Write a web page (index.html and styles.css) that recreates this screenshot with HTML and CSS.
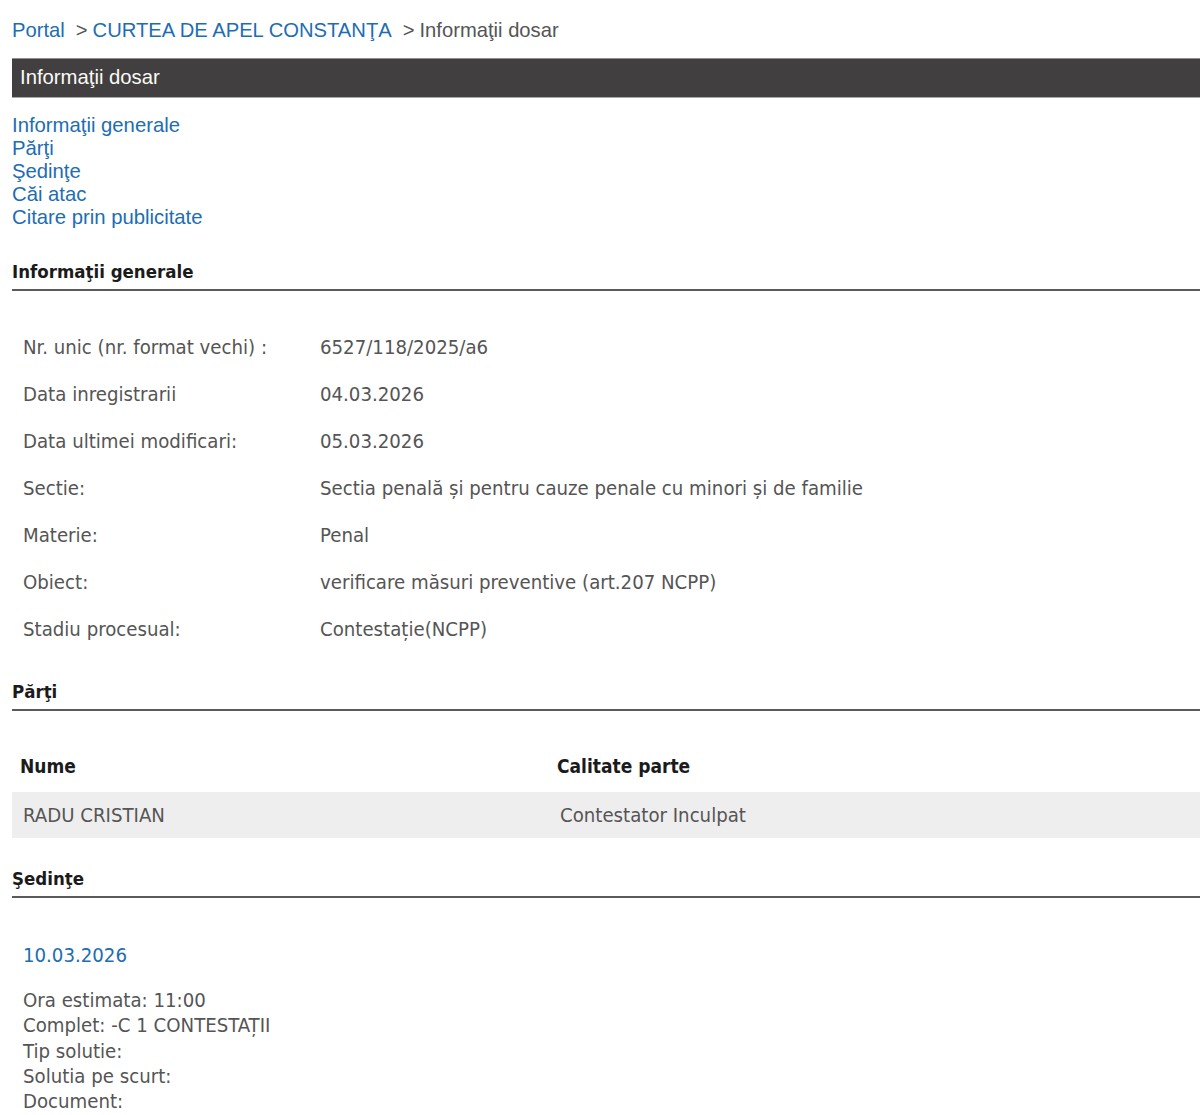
FILE: index.html
```html
<!DOCTYPE html>
<html lang="ro">
<head>
<meta charset="utf-8">
<title>Informaţii dosar</title>
<link rel="stylesheet" href="styles.css">
</head>
<body>
<div class="page">
  <nav class="breadcrumb">
    <a href="#">Portal</a><span class="sep">&gt;</span><a href="#">CURTEA DE APEL CONSTANŢA</a><span class="sep">&gt;</span><span class="current">Informaţii dosar</span>
  </nav>
  <div class="titlebar">Informaţii dosar</div>
  <ul class="toc">
    <li><a href="#">Informaţii generale</a></li>
    <li><a href="#">Părţi</a></li>
    <li><a href="#">Şedinţe</a></li>
    <li><a href="#">Căi atac</a></li>
    <li><a href="#">Citare prin publicitate</a></li>
  </ul>

  <h2 class="section-title first">Informaţii generale</h2>
  <div class="info-grid">
    <div class="lbl">Nr. unic (nr. format vechi) :</div><div class="val">6527/118/2025/a6</div>
    <div class="lbl">Data inregistrarii</div><div class="val">04.03.2026</div>
    <div class="lbl">Data ultimei modificari:</div><div class="val">05.03.2026</div>
    <div class="lbl">Sectie:</div><div class="val">Sectia penală și pentru cauze penale cu minori și de familie</div>
    <div class="lbl">Materie:</div><div class="val">Penal</div>
    <div class="lbl">Obiect:</div><div class="val">verificare măsuri preventive (art.207 NCPP)</div>
    <div class="lbl">Stadiu procesual:</div><div class="val">Contestație(NCPP)</div>
  </div>

  <h2 class="section-title parts">Părţi</h2>
  <div class="parties">
    <div class="th">Nume</div><div class="th">Calitate parte</div>
    <div class="td odd">RADU CRISTIAN</div><div class="td odd">Contestator Inculpat</div>
  </div>

  <h2 class="section-title hearings">Şedinţe</h2>
  <div class="hearing">
    <div class="hearing-date">10.03.2026</div>
    <div class="hearing-details">
      <div>Ora estimata: 11:00</div>
      <div>Complet: -C 1 CONTESTAȚII</div>
      <div>Tip solutie:</div>
      <div>Solutia pe scurt:</div>
      <div>Document:</div>
    </div>
  </div>
</div>
</body>
</html>
```

FILE: styles.css
```css
html, body {
  margin: 0;
  padding: 0;
  background: #ffffff;
}

.page {
  padding-left: 12px;
}

a {
  color: #1d6db3;
  text-decoration: none;
}

.breadcrumb {
  padding-top: 18px;
  font-family: "Liberation Sans", Arial, sans-serif;
  font-size: 20.2px;
  line-height: 24px;
  color: #555555;
  height: 24px;
}

.breadcrumb .sep {
  margin: 0 5px 0 11px;
  color: #555555;
}

.breadcrumb .current {
  color: #555555;
}

.titlebar {
  margin-top: 16px;
  height: 38px;
  border-top: 1px solid #8e8e8e;
  border-bottom: 1px solid #a8a8a8;
  background: #413f40;
  color: #fbfbf6;
  font-family: "Liberation Sans", Arial, sans-serif;
  font-size: 20.3px;
  line-height: 37px;
  padding-left: 8px;
}

.toc {
  list-style: none;
  margin: 16px 0 0 0;
  padding: 0;
  font-family: "Liberation Sans", Arial, sans-serif;
  font-size: 20.3px;
  line-height: 23px;
}

.section-title {
  margin: 0;
  font-family: "DejaVu Sans Condensed", "DejaVu Sans", sans-serif;
  font-weight: bold;
  font-size: 18.5px;
  line-height: 24px;
  color: #1b1b1b;
  padding-bottom: 5px;
  border-bottom: 2px solid #5a5a5a;
}

.section-title.first {
  margin-top: 31px;
}

.section-title.parts {
  margin-top: 27px;
}

.section-title.hearings {
  margin-top: 29px;
}

.info-grid {
  display: grid;
  grid-template-columns: 308px 1fr;
  padding-top: 33px;
  font-family: "DejaVu Sans Condensed", "DejaVu Sans", sans-serif;
  font-size: 20.2px;
  color: #555555;
}

.info-grid .lbl,
.info-grid .val {
  height: 47px;
  line-height: 47px;
  white-space: nowrap;
}

.info-grid .lbl {
  padding-left: 11px;
}

.parties {
  display: grid;
  grid-template-columns: 537px 1fr;
  margin-top: 31px;
  font-family: "DejaVu Sans Condensed", "DejaVu Sans", sans-serif;
  font-size: 20.2px;
}

.parties .th {
  font-weight: bold;
  color: #1b1b1b;
  padding: 12px 0 14px 8px;
  line-height: 24px;
  font-size: 19px;
}

.parties .td {
  color: #555555;
  height: 46px;
  line-height: 46px;
  padding-left: 11px;
}

.parties .td.odd {
  background: #eeeeee;
}

.hearing {
  padding-left: 11px;
  font-family: "DejaVu Sans Condensed", "DejaVu Sans", sans-serif;
  font-size: 20.2px;
}

.hearing-date {
  margin-top: 45px;
  line-height: 24px;
  color: #1d6db3;
}

.hearing-details {
  margin-top: 21px;
  line-height: 25.25px;
  color: #555555;
}
```
